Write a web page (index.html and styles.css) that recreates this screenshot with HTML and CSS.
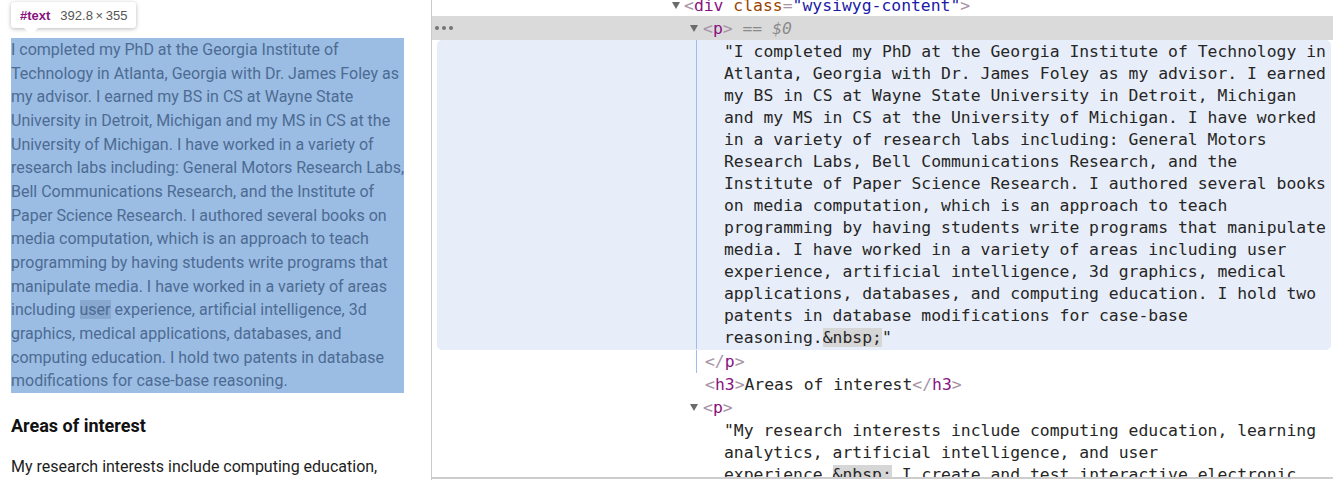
FILE: index.html
```html
<!DOCTYPE html>
<html>
<head>
<meta charset="utf-8">
<title>Inspect</title>
<link rel="stylesheet" href="styles.css">
</head>
<body>
<div class="app">
  <section class="page">
    <h2 class="page-title">Barbara Ericson</h2>
    <div class="tip"><span class="tip-node">#text</span><span class="tip-size">392.8&thinsp;×&thinsp;355</span></div>
    <p class="bio">I completed my PhD at the Georgia Institute of<br>Technology in Atlanta, Georgia with Dr. James Foley as<br>my advisor. I earned my BS in CS at Wayne State<br>University in Detroit, Michigan and my MS in CS at the<br>University of Michigan. I have worked in a variety of<br>research labs including: General Motors Research Labs,<br>Bell Communications Research, and the Institute of<br>Paper Science Research. I authored several books on<br>media computation, which is an approach to teach<br>programming by having students write programs that<br>manipulate media. I have worked in a variety of areas<br>including <span class="hit">user</span> experience, artificial intelligence, 3d<br>graphics, medical applications, databases, and<br>computing education. I hold two patents in database<br>modifications for case-base reasoning.</p>
    <h3 class="areas">Areas of interest</h3>
    <p class="research">My research interests include computing education,</p>
  </section>
  <section class="devtools">
    <div class="row row-div"><span class="tri"></span><span class="code"><span class="br">&lt;</span><span class="tag">div</span> <span class="attr">class</span><span class="br">=</span><span class="val">"wysiwyg-content"</span><span class="br">&gt;</span></span></div>
    <div class="row row-sel">
      <span class="dots"><i></i><i></i><i></i></span>
      <span class="tri"></span><span class="code"><span class="br">&lt;</span><span class="tag">p</span><span class="br">&gt;</span> <span class="eq">==</span> <span class="dollar">$0</span></span>
    </div>
    <div class="block">
      <div class="guide">
        <div class="ln">"I completed my PhD at the Georgia Institute of Technology in</div>
        <div class="ln">Atlanta, Georgia with Dr. James Foley as my advisor. I earned</div>
        <div class="ln">my BS in CS at Wayne State University in Detroit, Michigan</div>
        <div class="ln">and my MS in CS at the University of Michigan. I have worked</div>
        <div class="ln">in a variety of research labs including: General Motors</div>
        <div class="ln">Research Labs, Bell Communications Research, and the</div>
        <div class="ln">Institute of Paper Science Research. I authored several books</div>
        <div class="ln">on media computation, which is an approach to teach</div>
        <div class="ln">programming by having students write programs that manipulate</div>
        <div class="ln">media. I have worked in a variety of areas including user</div>
        <div class="ln">experience, artificial intelligence, 3d graphics, medical</div>
        <div class="ln">applications, databases, and computing education. I hold two</div>
        <div class="ln">patents in database modifications for case-base</div>
        <div class="ln">reasoning.<span class="ent">&amp;nbsp;</span>"</div>
      </div>
    </div>
    <div class="close"><span class="br">&lt;/</span><span class="tag">p</span><span class="br">&gt;</span></div>
    <div class="row row-h3"><span class="code"><span class="br">&lt;</span><span class="tag">h3</span><span class="br">&gt;</span>Areas of interest<span class="br">&lt;/</span><span class="tag">h3</span><span class="br">&gt;</span></span></div>
    <div class="row row-p"><span class="tri"></span><span class="code"><span class="br">&lt;</span><span class="tag">p</span><span class="br">&gt;</span></span></div>
    <div class="text2">
      <div class="ln">"My research interests include computing education, learning</div>
      <div class="ln">analytics, artificial intelligence, and user</div>
      <div class="ln">experience.<span class="ent">&amp;nbsp;</span> I create and test interactive electronic</div>
    </div>
  </section>
</div>
</body>
</html>
```

FILE: styles.css
```css
* { box-sizing: border-box; }
html, body { margin: 0; padding: 0; background: #fff; }
body { width: 1333px; height: 480px; overflow: hidden; }

.app { display: flex; height: 480px; }

/* ---------- left page ---------- */
.page {
  position: relative;
  width: 432px;
  flex: none;
  padding-left: 11px;
  border-right: 1px solid #cbcbcb;
  font-family: Roboto, "Liberation Sans", sans-serif;
  overflow: hidden;
}
.page-title {
  margin: -24px 0 0 0;
  font-size: 26px;
  line-height: 30px;
  font-weight: 700;
  color: #1a2a3a;
  white-space: nowrap;
}
.tip {
  position: absolute;
  left: 11px;
  top: 2px;
  width: 125px;
  height: 26px;
  background: #fff;
  border-radius: 3px;
  box-shadow: 0 1px 4px rgba(0,0,0,0.28);
  display: flex;
  align-items: center;
  padding-left: 9px;
  font-family: "Liberation Sans", Arial, sans-serif;
  font-size: 13px;
  white-space: nowrap;
}
.tip::after {
  content: "";
  position: absolute;
  left: 13px;
  bottom: -7px;
  border-left: 7px solid transparent;
  border-right: 7px solid transparent;
  border-top: 7px solid #fff;
}
.tip-node { color: #881280; font-weight: 700; margin-right: 10px; }
.tip-size { color: #555; }

.bio {
  margin: 32px 0 0 0;
  width: 393px;
  height: 355px;
  background: #9bbde3;
  color: #4d6b93;
  font-size: 16px;
  line-height: 23.67px;
  white-space: nowrap;
}
.hit { background: #88a8d0; }
.areas {
  margin: 22px 0 0 0;
  font-size: 18px;
  line-height: 22px;
  font-weight: 700;
  color: #111;
}
.research {
  margin: 18px 0 0 0;
  font-size: 16px;
  line-height: 24px;
  color: #1d1d1d;
  white-space: nowrap;
}

/* ---------- devtools ---------- */
.devtools {
  width: 901px;
  flex: none;
  height: 479px;
  border-bottom: 2px solid #cdcdcd;
  overflow: hidden;
  font-family: "DejaVu Sans Mono", "Liberation Mono", monospace;
  font-size: 16.4px;
  color: #262626;
}
.row { display: flex; align-items: center; }
.code { white-space: pre; }
.tri {
  width: 0; height: 0;
  border-left: 4.5px solid transparent;
  border-right: 4.5px solid transparent;
  border-top: 7px solid #6b6b6b;
  margin-right: 5px;
  flex: none;
}
.br { color: #a894a6; }
.tag { color: #881280; }
.attr { color: #994500; }
.val { color: #1a1aa6; }
.eq { color: #8a8a8a; }
.dollar { color: #8a8a8a; font-style: italic; }
.ent { background: #d6d6d6; }

.row-div { height: 22px; margin-top: -6px; padding-left: 240px; }
.row-div .tri { margin-right: 4px; }
.row-sel { height: 24px; background: #dadada; padding-left: 3px; }
.dots { display: flex; gap: 3px; width: 255px; flex: none; }
.dots i { display: block; width: 4px; height: 4px; border-radius: 50%; background: #747474; }

.block {
  margin-left: 5px;
  width: 894px;
  background: #e8eef9;
  border-radius: 5px;
  padding: 0 0 1px 259px;
}
.guide { border-left: 1px solid #9dbdf0; padding-left: 27px; padding-top: 1px; }
.ln { height: 22px; line-height: 22px; white-space: pre; }

.close {
  margin-left: 264px;
  height: 23px;
  line-height: 24px;
  border-left: 1px solid #9dbdf0;
  padding-left: 8px;
  white-space: pre;
}
.row-h3 { height: 22px; padding-left: 273px; }
.row-p { height: 24px; padding-left: 258px; }
.text2 { padding-left: 292px; margin-top: 1px; }
```
